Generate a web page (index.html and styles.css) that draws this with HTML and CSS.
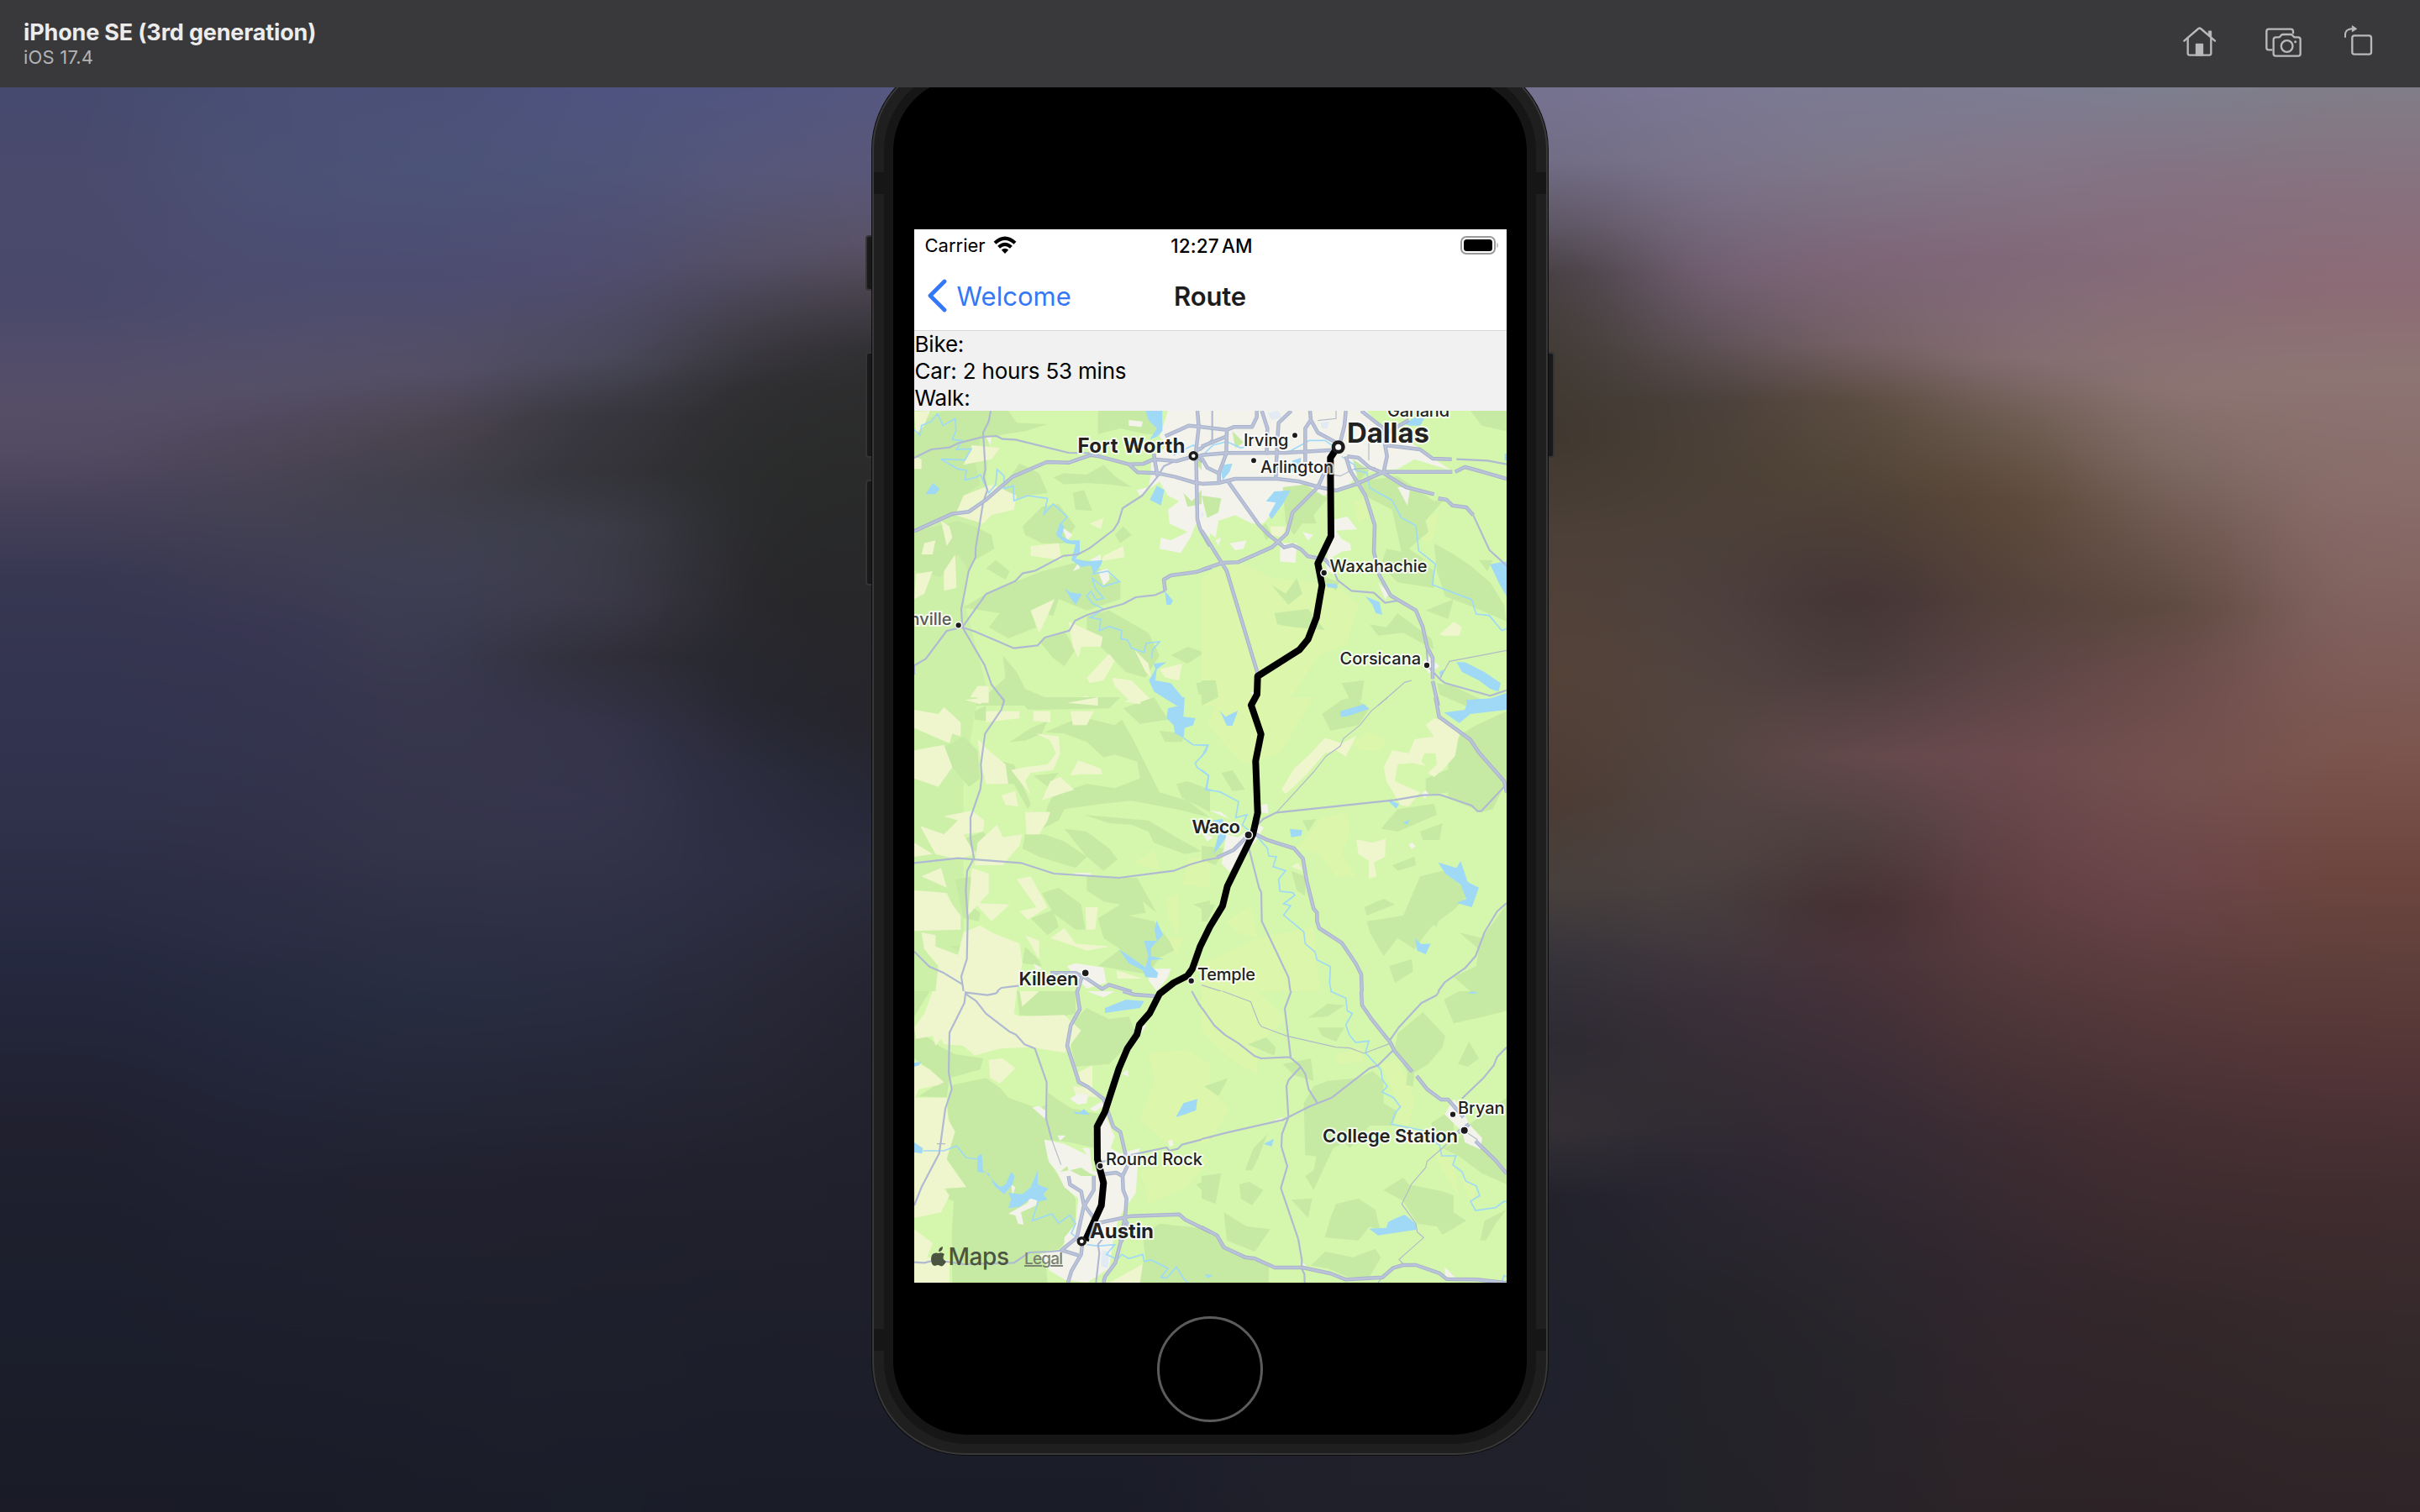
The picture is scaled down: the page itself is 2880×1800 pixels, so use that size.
FILE: index.html
```html
<!DOCTYPE html>
<html lang="en">
<head>
<meta charset="utf-8">
<title>iPhone SE (3rd generation)</title>
<link rel="stylesheet" href="styles.css">
</head>
<body>
<header class="toolbar">
  <div class="device-title">
    <h1 class="device-name">iPhone SE (3rd generation)</h1>
    <p class="device-os">iOS 17.4</p>
  </div>
  <div class="tools">
    <svg class="tool tool-home" viewBox="168 90 126 120" fill="none" stroke="#b9b9bb" stroke-width="7" stroke-linecap="round" stroke-linejoin="round">
      <path d="M178 146 L229 102 Q233 99 237 102 L288 146"/>
      <path d="M191 138 V190 Q191 197 198 197 H267 Q274 197 274 190 V138"/>
      <path d="M266 111 H275 V132 L266 125Z" fill="#b9b9bb" stroke-width="3"/>
      <path d="M221 197 V158 H244 V197Z" fill="#b9b9bb" stroke-width="5"/>
    </svg>
    <svg class="tool tool-camera" viewBox="462 90 138 120" fill="none" stroke="#b9b9bb" stroke-width="7" stroke-linejoin="round">
      <path d="M493 178 H480 Q472 178 472 170 V112 Q472 104 480 104 H559 Q567 104 567 112 V121"/>
      <path d="M506 133 H515 Q519 133 521 130 L524 126 Q527 123 531 123 H558 Q562 123 565 126 L568 130 Q570 133 574 133 H585 Q593 133 593 141 V192 Q593 200 585 200 H505 Q497 200 497 192 V141 Q497 133 506 133Z"/>
      <circle cx="545" cy="165" r="20.500"/>
      <circle cx="575" cy="149" r="4.500" fill="#b9b9bb" stroke="none"/>
    </svg>
    <svg class="tool tool-rotate" viewBox="744 90 108 120" fill="none" stroke="#b9b9bb" stroke-width="7" stroke-linejoin="round">
      <rect x="778" y="127" width="68" height="67" rx="8"/>
      <path d="M753 134 V124 Q754 103 779 103" stroke-width="6"/>
      <path d="M778 92 L794 103 L778 113Z" fill="#b9b9bb" stroke-width="3"/>
    </svg>
  </div>
</header>
<main class="stage">
  <svg class="defs" width="0" height="0" aria-hidden="true"><filter id="soften" x="0" y="0" width="1" height="1" color-interpolation-filters="sRGB"><feGaussianBlur stdDeviation="72 0"/></filter></svg>
  <div class="wallpaper" aria-hidden="true">
    <i class="w w1"></i><i class="w w2"></i><i class="w w3"></i><i class="w w4"></i><i class="w w5"></i><i class="w w6"></i>
    <i class="w w7"></i><i class="w w8"></i><i class="w w9"></i><i class="w w10"></i><i class="w w11"></i><i class="w w12"></i>
  </div>
  <div class="phone">
    <i class="key key-mute"></i><i class="key key-up"></i><i class="key key-down"></i><i class="key key-power"></i>
    <div class="frame">
      <i class="band band-tl"></i><i class="band band-tr"></i><i class="band band-bl"></i><i class="band band-br"></i>
      <div class="rim">
        <div class="glass">
          <section class="screen">
            <div class="status">
              <div class="carrier"><span class="carrier-name">Carrier</span>
                <svg class="wifi" viewBox="0 0 28 22" fill="none" stroke="#000" stroke-width="4.200"><path d="M2 8.200 Q14 -2.600 26 8.200"/><path d="M6.600 13.200 Q14 6.600 21.400 13.200"/><path d="M14 21 L9.800 16.600 Q14 12.900 18.200 16.600Z" fill="#000" stroke="none"/></svg>
              </div>
              <div class="clock">12:27<span class="ampm">AM</span></div>
              <svg class="battery" viewBox="0 0 46 22"><rect x="1" y="1" width="40" height="20" rx="6" fill="none" stroke="#9a9a9a" stroke-width="2"/><rect x="4" y="4" width="34" height="14" rx="3.500"/><path d="M43.500 7.500 Q46 11 43.500 14.500Z" fill="#9a9a9a"/></svg>
            </div>
            <nav class="navbar">
              <a class="back"><svg class="chevron" viewBox="0 0 24 40" fill="none" stroke="#3478f6" stroke-width="4.800" stroke-linecap="round" stroke-linejoin="round"><path d="M21 3 L4 20 L21 37"/></svg><span class="back-label">Welcome</span></a>
              <h2 class="nav-title">Route</h2>
            </nav>
            <div class="times"><p>Bike:</p><p class="car">Car: 2 hours 53 mins</p><p>Walk:</p></div>
            <svg class="map" viewBox="1088 489 705 1038">
              <!-- north-west -->
              <g transform="translate(1080 480) scale(.33333)">
                <path class="haze" d="M0 0H300L280 300 200 700 300 1080H0Z"/>
                <path class="wood" d="M24 110L60 60 130 27 360 27 390 70 500 75 420 100 350 110 260 130 240 200 260 290 200 330 180 400 24 450ZM400 215L470 250 500 320 430 330 380 345 340 300ZM520 265L560 250 640 255 700 220 740 260 800 300 720 290 640 285 560 290ZM24 460L180 420 240 440 300 470 310 520 240 560 220 600 180 540 120 620 24 600ZM200 730L280 680 380 640 480 600 640 560 760 640 760 700 640 740 540 700 520 760 440 740 460 800 360 840 290 800 330 750ZM410 440L480 370 540 360 600 440 560 500 480 500 420 470ZM680 27H850L900 110 850 110 760 90 680 110ZM640 760L720 740 860 820 900 900 850 980 780 960 700 880 640 820ZM470 850L560 815 600 880 560 940 520 910ZM340 900L390 960 420 1020 560 1080H240L350 980ZM590 320L630 310 660 385 600 380ZM280 590L315 560 365 600 350 630ZM940 900L1000 870 1060 890 1000 930ZM1030 1000L1080 990V1050L1040 1040ZM980 340L1030 290 1060 330 1040 400ZM740 470L770 440 800 470 760 500Z"/>
                <path class="field" d="M24 30L80 27 60 80 30 110ZM200 330L300 290 390 330 380 380 300 400 270 430 170 400ZM230 150L330 160 300 200 200 220ZM440 510L540 500 550 560 440 545ZM440 740L525 700 500 760 470 820ZM575 780L620 800 697 835 690 870 620 870 610 910 590 870ZM640 980L720 895 740 920 700 990 650 1000ZM730 980L800 990 870 1060 860 1080 800 1070 740 1010ZM60 500L100 490 90 540 50 540ZM130 600L170 540 175 660 130 670ZM30 610L90 600 60 680 24 700ZM650 430L700 410 690 450ZM900 950L980 930 970 990 920 980ZM250 1010L290 1010 290 1070 210 1070ZM120 420L150 440 160 480 140 510ZM700 545L770 510 775 550 690 565ZM810 880L860 930 870 980 850 960ZM24 190L50 200V235H24ZM560 1060L640 1045 700 1080H560Z"/>
                <path class="town" d="M930 27H1080V480L1030 430 1010 480 975 535 900 520 905 480 940 490 1000 460 935 430 930 380 970 350 930 330 900 280 830 330 818 310 860 300 870 250 870 200 930 150 900 120ZM790 60L840 65 835 85 790 80ZM280 120L300 122 295 150ZM650 560L690 540 690 570ZM680 600L715 590 722 630 700 650ZM590 600L610 570 615 590ZM550 440L590 470 570 490Z"/>
                <path class="wood" d="M985 320L1015 350 1050 310V360L1000 370ZM1020 200L1060 170 1080 200 1050 240Z"/>
                <path class="water" d="M850 27H910V100L890 120 865 130 890 90 860 60ZM65 325L90 285 115 305 100 325ZM890 295L917 310 905 365 865 345ZM530 470L545 425 560 440 550 475 580 490 615 490 615 535 600 555 640 565 697 560 690 580 665 612 655 580 620 585 585 560 600 505 565 500ZM560 660L580 675 622 682 600 720 585 700ZM918 670L948 705 940 720 925 720ZM866 880L880 930 925 925 890 950 885 990 940 1000 990 1060 975 1080H960L880 1030 862 990 885 950Z"/>
                <path class="river" d="M24 95L45 115 50 80 85 65 107 38 127 80 170 55 173 100 160 130 195 133 175 165 228 163 205 203 120 200 180 235 210 240 205 275 245 265 260 255 290 320 315 290 320 237 345 260 345 305 378 295 380 348 430 330 500 340 488 395 520 360 570 405 545 435M660 610L715 600 757 637 697 655 660 625 670 660 700 697 675 703 655 672 640 687 660 715 700 735 652 765 690 772 685 812 720 798 765 812 762 842 785 845 800 875 845 890 852 857 900 852 875 880 872 910M950 185L1000 160 1020 150 1050 170"/>
                <path class="road" d="M24 195L85 165 150 158 180 143 270 120 317 117 340 128 385 130 575 177 650 178M297 27L290 65 270 105 278 235 272 265 285 310 270 355 243 520 243 550 218 600 205 670 192 735 196 800 280 682 385 635 410 608 457 598 557 545 608 540 650 518 735 453 753 425 768 375 838 330 893 262 915 225 960 205M24 970V937L65 913 140 813 196 800 240 815 380 875 465 865 490 837 578 812 598 777 640 757 705 735 770 717 815 693 885 685 920 670M196 800L275 935 300 1005 345 1062 340 1080"/>
                <path id="hw-a" class="highway" d="M24 457L160 395 218 388 280 345 375 263 497 210 577 212 655 185 685 190 790 218 840 217 880 200 960 207 1020 190 1080 185M790 218L822 247 893 250 955 263 1030 285 1090 290M880 180L882 200 893 262M1085 586L1030 603 940 615 915 630 920 670M920 118L1005 80 1090 88M1035 27L1040 85 1030 170 1035 415 1045 450 1080 510M1030 170L1080 145M1040 195L1080 235"/>
                <use href="#hw-a" class="lane"/>
              </g>
              <!-- north-east -->
              <g transform="translate(1430 480) scale(.33333)">
                <path class="meadow" d="M240 620L480 650 560 720 520 860 420 900 300 1080H0V620L120 560ZM540 350L590 340 600 400 560 430ZM800 400L850 390 820 500 770 480Z"/>
                <path class="wood" d="M560 280L700 260 830 350 870 340 800 420 810 460 740 520 800 560 720 560 680 380 600 340ZM660 520L760 540 830 600 830 660 700 640 640 580ZM830 500L900 540 960 580 1030 640 1080 720 1089 780 1000 740 870 690 840 600ZM960 27H1089V100L1000 80ZM250 650L300 680 340 625 360 680 310 720ZM260 750L380 735 440 810 330 800 270 790ZM600 790L660 800 700 750 820 840 830 880 720 820 630 830ZM440 620L490 640 480 670 440 640ZM500 1000L580 990 570 1060 540 1080ZM0 990H50L60 1050 0 1080ZM800 740L850 720 900 700 880 770ZM840 1000L900 1010 1000 1060 940 1080 850 1040ZM990 560L1040 560 1020 600Z"/>
                <path class="town" d="M0 27H590L640 90 760 150 890 240 760 200 700 235 640 240 560 250 520 300 460 320 410 340 380 400 320 390 300 340 220 430 180 430 120 400 60 420 50 480 0 440ZM450 420L520 405 555 450 480 455 500 485 530 500 535 525 500 530 450 560ZM280 500L340 500 335 570 280 565ZM630 640L670 680 655 700ZM790 925L810 905 850 940 810 965ZM700 300L745 300 735 365ZM360 460L400 470 380 490ZM100 500L160 490 150 520 120 525ZM430 540L490 620 450 600ZM50 490L70 480 60 510ZM170 1030L200 1035 190 1050Z"/>
                <path class="wood" d="M0 330L70 340 60 390 20 410ZM290 300L370 290 450 340 400 400 410 430 360 430 330 470 300 430ZM210 440L230 430 250 470 230 490ZM110 100L150 140 120 160ZM540 200L600 240 560 280Z"/>
                <path class="field" d="M245 440L300 440 290 480 250 470ZM850 825L900 780 930 800 920 830 860 830Z"/>
                <path class="water" d="M230 350L260 315 317 312 290 360 250 415 240 400 265 355ZM80 220L110 215 100 245 75 275 70 250ZM725 75L760 50 795 55 780 80 745 80ZM325 205L355 195 350 250 310 245ZM445 645L480 645 487 660 450 658ZM585 690L635 710 645 755 622 750 610 720ZM1030 575L1089 565V690L1060 640ZM910 925L940 925 1010 960 1068 1000 1060 1030 1030 1020 990 990 930 960ZM945 1060L1030 1055 1089 1035V1080H950ZM1082 180H1089V205H1082ZM848 960L865 950 855 985Z"/>
                <path class="sky" d="M235 35L275 27 285 50 250 60ZM425 70L455 65 450 90 430 90ZM0 385L8 400 0 410Z"/>
                <path class="river" d="M500 190L545 220 550 240 590 248 600 302 680 347 712 408 765 437 775 527 835 575 823 648 965 702 980 753 1027 758 1072 812 1089 805M310 175L385 133 440 133 480 160M0 190L40 150 90 137 140 160 175 150"/>
                <path class="road" d="M470 590L485 632 535 670 615 677 655 713 700 705M970 400L1028 525 1089 580M910 200L1020 205 1089 218M38 27V130L0 165M850 985L870 1000 1030 1045 1089 1025M803 870L808 940 850 985"/>
                <path class="lane-thin" d="M850 985L885 922 1089 883M750 990L725 997 630 1080M480 27V55L415 62M597 130V205M620 230L545 235 495 260 430 250"/>
                <path id="hw-b" class="highway" d="M0 185L90 178 300 177 470 167M0 288L60 285 120 270 270 270 350 280 420 300 480 312 550 290 650 245 895 245M905 245L940 228 985 240 1089 270M650 250L730 300 830 325M845 340L875 345 895 365 945 372 970 400M515 190L530 240 585 330 618 435 615 530 635 615 675 687 765 740 790 800 805 870 825 910 825 985M825 992L845 1080M515 27L510 80 490 160M387 27L390 60 370 90 370 210M390 60L415 105 480 140M520 190L560 195 600 230 650 250M655 150L662 190 650 245M570 27L650 90 655 150 780 165 825 198 893 200M320 27L275 70 270 140 265 270M197 27V50L180 85H115L90 95 0 85M90 95L88 180 62 250 62 285M215 27L235 90 232 185M90 118L0 155M95 280L205 435 240 470 275 498M450 220L415 300 325 390 305 465 270 498 250 515 130 568 75 570 0 595M275 498L295 515 325 507 355 522 380 547 440 558 470 590M0 455L75 575 90 600 200 965M0 195L20 230 60 250M655 110L740 60"/>
                <use href="#hw-b" class="lane"/>
              </g>
              <!-- west -->
              <g transform="translate(1080 830) scale(.33333)">
                <path class="haze" d="M0 0H250L200 300V1050H0Z"/>
                <path class="wood" d="M350 0H760L720 40 430 45 400 10ZM130 180L200 140 250 190 260 290 220 320 140 230ZM340 230L380 240 440 380 430 400 380 310 330 310ZM450 280L540 270 500 320ZM490 125L620 70 740 100 765 80 800 140 860 260 900 340 1000 370 1080 430 960 400 800 370 700 380 560 400 540 440 480 470 500 390 520 350 640 310 740 325 830 290 820 230 740 205 700 215 640 160 560 130ZM560 470L640 480 720 540 750 580 700 620 640 570ZM630 420L740 430 860 440 960 500 1050 550 990 560 880 520 860 480 800 455 720 450ZM420 490H490L560 515 640 570 600 610 470 570 410 540ZM480 700L540 680 620 740 635 830 600 830 520 770ZM640 640L820 645 890 770 840 730 850 770 790 780 880 800 960 900 900 930 860 990 680 960 760 900 700 860 680 790 760 740 700 730 640 690ZM440 790L520 760 540 820 500 850ZM170 650L240 640 220 740 260 770 255 800 200 790ZM190 510L270 480 293 510 270 550 200 550ZM150 890L220 880 260 835 280 900 230 930ZM420 890L470 940 480 960 410 950ZM365 160L440 110 500 85 480 130 420 155ZM770 40L880 0 930 80 830 95ZM900 120L990 130 980 160 920 160ZM960 310L1000 300 1080 330V410L980 360ZM100 130L150 130 150 170ZM1020 740L1080 725V770ZM240 50L280 30V85L240 80Z"/>
                <path class="meadow" d="M920 720L970 700V860L930 780ZM810 590L880 545 900 620ZM1000 580L1080 560V680L980 670ZM930 860L990 860 960 920Z"/>
                <path class="field" d="M24 45L110 60 130 35 190 90V140L160 130 150 165 24 110ZM24 190L130 170 160 250 110 320 24 290ZM280 50H400L400 75 280 90ZM450 50H510V90L450 85ZM582 50H665L640 100 590 100ZM570 20L680 0V30ZM770 15L840 0 830 25ZM250 150L290 190 350 240 360 310 280 310 265 250ZM205 10L290 0 260 25ZM460 130L540 140 545 200 520 260 440 270 420 300 440 350 370 260 420 250 500 240 530 200 510 155ZM580 280L610 225 690 255 695 275 620 275ZM480 368L510 300 545 285 595 330ZM335 350L385 335 395 390 350 385ZM45 460L130 490 180 440 130 425 230 405 275 440 270 480 200 490 240 560 180 580 100 560ZM250 520L320 455 340 500 410 490 400 530 340 600 240 600ZM420 410L510 410 500 440 470 490 425 490ZM24 520L90 560 24 570ZM24 690L100 695 140 700 160 740 190 780V830L24 835ZM230 610L290 630V700L215 780ZM50 640L120 610 140 680ZM240 735L365 740 300 800ZM390 650L440 640 500 750 430 795 400 765 460 750ZM635 750L680 750 670 830 640 830ZM200 840L260 815 300 840 400 880 410 950 390 1050H100L110 960 60 900 50 840 100 850V890L180 920ZM510 860L560 825 600 880 725 890 640 905ZM420 850L470 870V935ZM745 975L840 1005 750 1005Z"/>
                <path class="town" d="M570 960L600 950 700 965 710 1020 640 1040 600 1000ZM870 970L940 970 930 1000 890 1050 860 1010ZM595 628H655V636H595ZM450 950L480 970 460 975Z"/>
                <path class="water" d="M950 0H990L985 70 1028 75 1020 100 990 110 985 145 955 130 950 100 925 75 930 40 970 30ZM755 900L800 930 850 965 860 925 845 870 890 870 882 830 890 797 912 850 870 895 870 925 915 935 870 940 870 960 895 985 890 1003 850 1000 840 975 790 950Z"/>
                <path class="river" d="M985 145L1020 170 1073 172 1065 195 1027 235 1035 252 1075 280 1068 330 1085 332"/>
                <path class="road" d="M335 0L345 12 335 45 277 130 262 240 265 285 260 328 225 430 225 505 237 575 213 620 208 690 215 790 212 935 192 997 200 1050M24 592L180 575 405 592 523 630 755 645 950 620 1010 597 1085 576M24 908L78 962 130 985 195 1025M320 1050L335 1038 400 1030"/>
                <path id="hw-c" class="highway" d="M510 985H600L640 1005 695 1042 720 1027 800 1052M622 1000L605 1055"/>
                <use href="#hw-c" class="lane"/>
              </g>
              <!-- east -->
              <g transform="translate(1430 830) scale(.33333)">
                <path class="meadow" d="M60 0H400L280 200 150 240 20 100ZM430 430L520 410 530 480 500 560 550 640 480 640 420 560 340 540ZM540 160L600 120 660 150 640 190 560 190ZM90 800L180 740 200 860 130 840ZM200 860L400 820 420 1050H0V950Z"/>
                <path class="wood" d="M430 60L500 10 540 0 600 40 560 100 460 120ZM640 470L700 400 830 380 840 420 700 480ZM880 190L930 130 980 100 1089 50V300L1040 400 1000 410 880 360ZM800 290L900 250 880 340 800 350ZM940 260L1040 230 1089 300 1000 390ZM590 800L720 780 780 640 860 620 960 700 900 760 820 820 760 900 700 860 650 925 600 840ZM680 600L760 570 765 600 700 620ZM580 750L650 720 690 740 590 780ZM800 800L850 780 840 820ZM920 840L1000 860 1089 740V1050H960L900 1000 980 960 990 900ZM780 480L860 450 850 510 790 510ZM320 620L370 640 370 710 340 690ZM70 270L110 260 155 330 110 335ZM670 960L750 935 755 980 690 1020ZM360 440L410 435 380 480ZM0 740H50L20 800H0ZM0 530L80 540 50 600 0 580Z"/>
                <path class="field" d="M285 330L330 255 390 200 440 145 500 165 553 138 515 212 480 190 440 200 380 270 340 310 300 345ZM650 250L680 190 740 200 760 150 830 140 800 100 830 75 880 90 920 130 905 210 860 260 830 285 808 270 840 240 835 200 795 200 785 230 800 245 750 235 700 240 690 300 780 340 740 390 710 385 660 300ZM552 508L610 520 657 505 655 570 615 590 625 640 597 648V585L560 560ZM320 605L345 590 360 620Z"/>
                <path class="water" d="M495 50L580 25 598 42 520 68 497 70ZM865 55L940 45 950 10 1089 0V45L960 60 920 92ZM65 48L85 70 130 48 110 102 90 102ZM315 470L360 475 355 495 320 500ZM845 590L910 610 925 585 950 660 990 680 965 750 910 735 945 720 925 670 870 630ZM762 862L785 882 818 880 800 918 770 905ZM40 440L75 435 88 500 60 540 42 560 60 490ZM720 448L742 438 735 455ZM660 365L705 380 695 398Z"/>
                <path class="town" d="M88 490L130 500 200 455 222 465 190 520 140 560 100 625 72 595ZM785 345L800 332 812 348 795 362ZM740 528L750 518 764 532 750 543ZM30 405L70 410 100 435ZM0 480L40 500 20 515ZM212 385L235 380 238 415 215 412Z"/>
                <path class="river" d="M0 260L25 280 15 330 65 338 132 373 122 430 162 420 145 457 200 500 235 540 240 567 267 570 255 605 300 620 275 650 280 693 325 698 333 707 293 738 318 745 293 778 365 838 370 880 405 910 412 938 460 962 457 1020 463 1050M0 213L22 172H0"/>
                <path class="road" d="M165 525L205 680 213 697 215 800 310 1000 317 1050M200 455L220 435 267 412 690 367 790 350 850 348 965 387 985 407H998L1082 318M1089 735L1055 765 1010 840 978 925 940 968 868 1018 845 1050M0 585L60 573"/>
                <path class="lane-thin" d="M0 1028L75 1052M665 0L605 50 565 100 507 147 495 175 445 210 400 267 267 412"/>
                <path id="hw-d" class="highway" d="M835 0L848 70 960 152 990 197 1080 300 1089 340M55 573L115 545 160 500M185 485L230 508 330 540 362 577 375 655 400 755 412 770V800L420 825 500 877 550 950 570 990 572 1052"/>
                <use href="#hw-d" class="lane"/>
              </g>
              <!-- south-west -->
              <g transform="translate(1080 1180) scale(.33333)">
                <path class="wood" d="M160 335L280 310 330 345 360 380 470 420 500 400 640 430 700 440 660 490 670 560 580 540 490 530 500 600 560 690 600 740 600 850 540 920 490 930 500 1041H160L158 860 165 750 140 740V600L160 500 140 420ZM500 360L540 390 620 440 500 420ZM570 130L640 60 720 100 790 90 820 160 780 200 720 260 600 270ZM390 0H600V80L520 95 400 85ZM24 130L120 200 170 225 270 240 260 280 150 310 140 380 40 375 110 330 80 280 24 240ZM800 1041L850 960 840 870 900 830 1080 850V1041ZM24 0H80L24 90ZM1030 690L1080 670V740Z"/>
                <path class="meadow" d="M860 220L1000 210 1080 260V540L920 540 830 460 880 320ZM830 640L1080 600 1000 700 860 760Z"/>
                <path class="field" d="M24 130L60 80 90 0H390L380 80 400 90 560 85 620 140 560 220 440 200 330 205 240 230 200 195 130 190 120 170 100 195 90 160 30 170ZM290 245L340 240 385 275 330 330 295 310ZM24 250L80 280 130 325 110 335 40 350 24 390ZM24 380L140 380 145 460 170 500 140 600 210 700 130 705 150 730 120 790 24 810ZM24 850L90 900 70 950 150 960V1041H24ZM400 0H470L410 55ZM610 290L660 265V345L620 325ZM590 340L650 345 680 380 600 370ZM720 780L770 765 760 820 720 830ZM720 1041L840 975 830 1041Z"/>
                <path class="town" d="M488 530L560 545 640 585 625 560 650 560 660 640 690 650 675 490 705 440 740 520 725 560 760 580 830 560 825 580 815 720 760 800 740 850 720 990 640 1041 560 1030 510 1000 470 940 560 920 560 880 600 830 610 740 560 700 530 640 505 610ZM580 385L610 365 645 370 640 400 610 405ZM445 415L470 410 497 430 490 455ZM370 690L385 700 375 730ZM440 710L467 720 460 765 405 790 415 835 395 830 385 800 360 795 430 755ZM650 420L700 390 700 410 670 430ZM640 0H740L700 22ZM930 535L945 530 950 550 935 555ZM830 125L855 120 835 150ZM765 295L785 280 790 305ZM535 515H565L545 535Z"/>
                <path class="wood" d="M580 640L620 630 650 650 675 660 620 660ZM545 645L570 625 575 640Z"/>
                <path class="sky" d="M695 925L720 930 715 990 690 980Z"/>
                <path class="water" d="M705 60L780 30 845 35 830 60 760 70 705 78ZM24 540L55 560 52 580 24 575ZM590 430L615 433 630 420 650 442 600 438ZM958 450L985 400 1035 385 1030 425 990 440ZM360 775L370 740 360 720 410 725 440 700 465 640 465 690 503 705 485 725 500 745 470 750 440 740 400 770ZM250 590L265 580 270 640 330 700 350 690 370 645 383 660 375 690 345 725 310 695 290 650 250 645ZM24 255L50 253 40 265 24 270ZM1065 1005L1080 1000V1020Z"/>
                <path class="river" d="M55 570H130L175 553 210 595 255 600M440 710L467 750 445 820 515 795 540 828 580 800 600 830 585 865 605 880M640 905L680 910 740 905 710 940 750 958 765 940 790 955 840 940 845 965 870 960 930 990 905 1022 925 1025 960 985 985 1025 1000 1041"/>
                <path class="road" d="M208 0L203 42 150 148 147 290 158 350 135 420 113 580 50 700 24 765M205 8L245 35 280 80 365 145 387 155 418 190 455 205 497 325 495 455 515 530M210 5L285 14 315 8 325 0M24 968L60 970 100 960 200 975 380 970 435 933 510 930 560 925M1015 0L1040 45 1085 105M690 610L820 580 925 558 935 570 965 563 980 548 1085 521M673 1041L685 935 680 905 700 880"/>
                <path class="lane-thin" d="M515 530L548 620M105 545H135"/>
                <path id="hw-e" class="highway" d="M605 0L615 65 583 122 570 195 612 325 645 343 700 385 735 485 760 503 787 620 768 660 770 710 782 740 778 795 760 900 742 970 705 1020 700 1041M575 660L580 690 620 715 630 765 605 880 550 925 610 943M665 660V710L632 765 665 810M770 805L790 840 760 900M680 828L800 803 970 797 990 815 1085 862M573 1041L585 1000 620 940 625 895M690 655L745 648 768 660M770 0L810 12 890 18"/>
                <use href="#hw-e" class="lane"/>
              </g>
              <!-- south-east -->
              <g transform="translate(1430 1180) scale(.33333)">
                <path class="meadow" d="M640 260L700 240 760 380 740 480 690 470 700 400ZM0 0H200L300 100 200 190 200 300 100 240 0 140ZM0 300L100 420 40 520 0 540ZM820 560L900 600 920 740 860 640ZM470 230L570 200 580 250 490 260ZM920 660L980 690 970 780Z"/>
                <path class="wood" d="M700 150L790 75 870 160 860 200 810 260 760 290 755 340 730 335 735 290 690 200ZM365 400L400 340 450 320 560 310 610 285 650 320 650 400 700 430 680 480 600 480 530 560 510 540 470 560 400 710 370 660 400 640 410 590 370 585ZM440 880L460 810 480 760 560 740 620 780 640 860 600 840 560 890ZM650 710L720 665 740 690 860 715 900 730 900 790 945 820 860 870 840 840 770 830 720 750ZM0 860L60 880 100 930 240 980V1041H0ZM135 690L170 680 220 710 180 765 140 740ZM155 640L185 560 235 510 200 600 180 640ZM320 745L395 740 380 810ZM860 560L910 540 950 480 1089 380V690L1000 650 920 590ZM865 30L920 0H1089V70L1010 90 900 115ZM390 980L440 930 540 950 620 920 640 950 600 1020 520 1020 450 990ZM165 190L230 165 265 200 260 230ZM415 130L510 130 480 180 430 160ZM380 95L450 45 510 50 450 90ZM820 470L900 420V500L830 520ZM10 340L95 310 60 375ZM915 260L955 180 990 240 950 270ZM995 890L1010 820 1089 780 1050 830 1015 890ZM0 660L70 650 50 760 0 740ZM80 790L160 840 245 850 190 930 90 890ZM450 400L540 340 560 400ZM290 260L390 240 400 320 330 300Z"/>
                <path class="town" d="M868 440L900 385 935 430 955 475 1002 525 995 565 940 540 930 500ZM260 460L290 450 280 468ZM868 985L908 1025 870 1020ZM355 965L375 980 355 985Z"/>
                <path class="water" d="M598 848L660 845 665 825 695 810 725 798 765 830V852L700 862 630 872ZM222 545L258 527 250 555ZM947 8L970 0 988 8ZM12 1010L40 1015 22 1025ZM820 520L850 530 840 550Z"/>
                <path class="river" d="M460 0L515 25 520 70 538 80 515 120 527 155 550 183 597 178 585 220 640 280 645 315 663 340 645 360 685 380 710 413 690 435 678 475 790 497 850 550 857 588H908L897 620 930 645 943 678 980 695 993 730 960 750 978 783 1050 773 1080 750 1089 752M1070 1041L1080 1015 1089 1020"/>
                <path class="road" d="M0 58L45 122 85 157 130 185 190 232 213 240 315 235 350 265 370 295 382 350 412 398M320 0L297 62 318 235M352 272L310 318 303 340 310 450 287 510 285 555 306 625 283 703 345 885 358 960 357 990 367 1010 368 1041M0 528L90 505 290 460 310 450 385 412 465 380 600 275 630 265 685 210M848 0L838 15 785 42 705 128 672 175M1089 200L1055 235 1043 265 1008 308 930 383"/>
                <path class="lane-thin" d="M75 0L175 37 205 115 215 127 305 160 480 200 530 203 580 222 670 188M900 525L805 608 800 630 750 688 715 760 765 830 770 860 793 880 705 958 720 975M940 500L985 530M645 1022L630 1041"/>
                <path id="hw-f" class="highway" d="M570 0L573 50 605 97 675 185 690 215 752 288M768 303L805 350 855 387H880L935 450M978 535L1050 605 1089 652M0 843L55 872 80 915 155 950 190 955 262 987H360L460 1008 515 1030 645 1022 685 988 720 978H765L850 1008 875 1028 985 1030 1089 1042M915 505L955 475"/>
                <use href="#hw-f" class="lane"/>
              </g>
              <path class="route" d="M1592 532L1583.300 545 1584 638.300 1568.300 670.700 1573.300 696.700 1566.700 735 1556.700 761 1546.700 773.300 1496.700 805 1496 826.700 1489 839.500 1500.700 874 1494.300 906 1496.700 967.700 1491 993.300 1460.700 1055 1455 1078.300 1440 1103 1428.300 1126.700 1419 1153.300 1413 1161.700 1396.700 1170 1380 1183 1368.300 1206 1356 1220 1353 1231.700 1341.700 1248.300 1331.700 1271.700 1315 1323.300 1305.700 1341 1306 1380 1313.300 1408.300 1310.700 1435 1291.700 1476.700"/>
              <g class="pins">
                <circle class="ring" cx="1592.700" cy="532.300" r="5.800"/><circle class="ring ring-s" cx="1420.300" cy="542.700" r="4"/><circle class="ring ring-s" cx="1287.300" cy="1477.700" r="4"/>
                <circle cx="1541" cy="518.300" r="3.700"/><circle cx="1492" cy="548.300" r="3.700"/><circle cx="1575.700" cy="682" r="3.900"/><circle cx="1698" cy="792" r="3.900"/><circle cx="1140.700" cy="744.300" r="3.900"/><circle cx="1485.700" cy="994" r="4.800"/><circle cx="1291.700" cy="1158.300" r="4.600"/><circle cx="1417.700" cy="1167.700" r="3.900"/><circle cx="1309.300" cy="1388" r="3.900"/><circle cx="1742.700" cy="1345.700" r="4.800"/><circle cx="1729" cy="1326.700" r="3.900"/>
              </g>
              <g class="labels">
                <text class="metro" x="1603" y="526.700" textLength="98">Dallas</text>
                <text class="city" x="1282.500" y="539" textLength="128">Fort Worth</text>
                <text class="city" x="1297" y="1473.500" textLength="76">Austin</text>
                <text class="large" x="1418.500" y="992" textLength="57.500">Waco</text>
                <text class="large" x="1212.500" y="1173.300" textLength="71">Killeen</text>
                <text class="large" x="1574" y="1360" textLength="161">College Station</text>
                <text x="1480" y="530.700" textLength="53.500">Irving</text>
                <text x="1500" y="563.300" textLength="87">Arlington</text>
                <text x="1651" y="495.700" textLength="74">Garland</text>
                <text x="1582.500" y="680.700" textLength="116">Waxahachie</text>
                <text x="1594.500" y="791" textLength="96.500">Corsicana</text>
                <text class="faded" x="1132.500" y="743.500" text-anchor="end">Stephenville</text>
                <text x="1425" y="1166.700" textLength="69">Temple</text>
                <text x="1316" y="1386.700" textLength="115">Round Rock</text>
                <text x="1735" y="1325.700" textLength="55.500">Bryan</text>
              </g>
              <g class="brand">
                <path d="M1122 1484 Q1117 1485 1117 1490 Q1122 1490 1122 1484ZM1117 1492 Q1120 1490 1124 1493 Q1120 1498 1126 1502 Q1122 1509 1119 1507 Q1116 1505 1113 1507 Q1108 1507 1108 1498 Q1109 1490 1117 1492Z"/>
                <text class="brand-name" x="1128.500" y="1506" textLength="72.500">Maps</text>
                <text class="legal" x="1219" y="1505" textLength="46">Legal</text>
              </g>
            </svg>
          </section>
          <i class="home-button"></i>
        </div>
      </div>
    </div>
  </div>
</main>
</body>
</html>
```
FILE: styles.css
```css
* { box-sizing: border-box; margin: 0; padding: 0; }
html, body { height: 100%; }
body {
  display: flex;
  flex-direction: column;
  width: 2880px;
  height: 1800px;
  overflow: hidden;
  background: #1b1d29;
  font-family: Inter, "Liberation Sans", sans-serif;
}
i { display: block; }

.toolbar {
  flex: none;
  display: flex;
  justify-content: space-between;
  align-items: flex-start;
  height: 104px;
  padding: 23px 56px 0 28px;
  background: #39393b;
  position: relative;
  z-index: 2;
}
.device-name { font-size: 27px; line-height: 32px; font-weight: 700; color: #ececec; letter-spacing: -.16px; white-space: nowrap; }
.device-os { font-size: 22px; line-height: 27px; color: #b3b3b5; letter-spacing: .2px; }
.tools { display: flex; padding-top: 7px; }
.tool { height: 40px; overflow: visible; }
.tool-home { width: 42px; margin-right: 56px; }
.tool-camera { width: 46px; margin-right: 48px; }
.tool-rotate { width: 36px; }

.stage { flex: 1; display: flex; justify-content: center; align-items: flex-start; position: relative; overflow: hidden; }
.defs { position: absolute; }

/* Blurred desktop: vertical colour columns melted together sideways */
.wallpaper {
  position: absolute;
  inset: 0 -240px;
  display: grid;
  grid-template-columns: 443px 203px 203px 203px 169px 459px 502px 175px 186px 183px 193px 1fr;
  filter: url(#soften);
}
.w1 { background: linear-gradient(#454a6e, #4a4a6c 6.500%, #4a496b 15%, #564e68 22%, #534b62 25.500%, #47415a 29%, #373752 34.500%, #32334f 45%, #2f3049 52%, #252940 61%, #20202f 73%, #1b1e2c 86%, #1a1b26); }
.w2 { background: linear-gradient(#494f75, #4b5175 6%, #4b4c70 13%, #554f68 21%, #4d4658 25.500%, #434152 30%, #383652 38%, #34344f 45%, #303048 54%, #252a3f 64%, #202131 77%, #191b27); }
.w3 { background: linear-gradient(#4b5078, #4c5378 6%, #4c4c71 13%, #554f66 20%, #4b4450 24%, #403f4a 28%, #3f4054 34%, #38374e 43%, #33334a 54%, #272d40 64%, #21212f 77%, #1a1c28); }
.w4 { background: linear-gradient(#4e5480, #4e5479 6%, #504d70 13%, #4b4a5c 19%, #38373f 23%, #34343a 27%, #3c3d49 31%, #3c3a49 36%, #302f3a 40%, #35344a 45%, #36354e 50%, #303147 57%, #272b3d 65%, #21202e 77%, #1a1e29); }
.w5 { background: linear-gradient(#505580, #57577a 6%, #555066 12%, #403c45 17%, #2e2e30 21%, #2a2b2b 27%, #27272a 36%, #262630 43%, #2a2b3c 48%, #2d2e42 55%, #282837 64%, #21212d 77%, #1c1e2a 89%, #1a1c28); }
.w6 { background: linear-gradient(#565880, #5a5778 6%, #5a5266 11%, #46404a 14.500%, #2e2e30 18.500%, #292a29 27%, #25242a 45%, #262838 51%, #2a2b3a 55%, #242330 63%, #20202c 77%, #1a1c28); }
.w7 { background: linear-gradient(#757290, #726d86 5%, #5d5664 9.500%, #453f41 13%, #403a33 19%, #40382f 25%, #4d4038 32%, #544238 41%, #4b3b33 50%, #47403c 56%, #36333a 61%, #2d2a32 67%, #343035 73%, #22222c 78%, #1f212d 89%, #20202a); }
.w8 { background: linear-gradient(#7b7794, #7a7389 6%, #736074 13%, #5e5157 18%, #4a403b 22%, #4b4036 27%, #4e413e 36%, #534540 45%, #4f4342 54%, #453c3f 59%, #3b303a 64%, #332d33 70%, #2a2632 77%, #242328 86%, #222229); }
.w9 { background: linear-gradient(#7b7a92, #7e788a 5%, #7d6678 12%, #756166 18%, #5b4c40 22%, #524538 27%, #433435 36%, #4a3c3c 41%, #64494b 47%, #4f4040 52%, #432f32 57.500%, #48333a 61%, #3a2c36 70%, #2d272f 80%, #26252a 89%, #272329); }
.w10 { background: linear-gradient(#7d7c92, #837586 6%, #806879 12%, #846e72 19%, #6c5b50 23.500%, #5b4838 29%, #54423b 36%, #5a4443 40%, #6c4a4e 47%, #603f42 57%, #513839 64%, #3e2d33 73%, #33272e 83%, #2c2327); }
.w11 { background: linear-gradient(#7d7f8f, #847283 6%, #866b78 13%, #8c7472 21%, #7f6a64 26%, #6e5850 31%, #5d493f 36.500%, #6a4c4a 41%, #74514f 48%, #6c464a 55.500%, #583a3b 64%, #452f33 73%, #33272a 86%, #2d2326); }
.w12 { background: linear-gradient(#807d88, #88707d 8%, #8c6b76 14%, #8d7573 20%, #886c69 29%, #80605d 38%, #7c554f 46.500%, #6d453f 55.500%, #60403b 61%, #523436 69%, #412d30 77%, #33282a 89%, #2f2427); }

.phone { position: relative; width: 804px; height: 1664px; margin-top: -36px; }
.frame {
  position: relative;
  height: 100%;
  padding: 11px 12px;
  border: 2px solid #383838;
  border-radius: 110px;
  background: #1f1f1f;
  box-shadow: 0 0 0 1px #0c0c0e;
}
.rim { height: 100%; padding: 11px; border-radius: 99px; background: #161616; }
.glass { display: flex; flex-direction: column; align-items: center; height: 100%; padding-top: 181px; border-radius: 88px; background: #000; }
.band { position: absolute; width: 12px; height: 26px; background: #161616; }
.band-tl { left: 0; top: 135px; }
.band-tr { right: 0; top: 135px; }
.band-bl { left: 0; bottom: 122px; }
.band-br { right: 0; bottom: 122px; }
.key { position: absolute; left: -8px; width: 12px; height: 126px; border: 2px solid #343436; border-radius: 4px; background: #19191a; }
.key-mute { top: 212px; height: 66px; }
.key-up { top: 351px; }
.key-down { top: 503px; }
.key-power { left: auto; right: -8px; top: 351px; }

.screen { flex: none; display: flex; flex-direction: column; width: 705px; height: 1254px; background: #fff; overflow: hidden; }
.status { display: grid; grid-template-columns: 1fr auto 1fr; align-items: center; height: 38px; padding: 0 9px 0 13px; }
.carrier { display: flex; align-items: center; gap: 9px; font-size: 22px; }
.carrier-name { letter-spacing: 0; }
.wifi { width: 28px; height: 22px; }
.clock { font-size: 22.500px; font-weight: 500; letter-spacing: .2px; }
.ampm { margin-left: 3px; }
.battery { width: 46px; height: 22px; justify-self: end; }
.navbar { display: grid; grid-template-columns: 1fr auto 1fr; align-items: center; height: 83px; padding: 1px 0 1px 15px; border-bottom: 1px solid #d8d8d8; }
.back { display: flex; align-items: center; gap: 12px; color: #3478f6; font-size: 31px; }
.back-label { letter-spacing: .05px; }
.chevron { width: 24px; height: 40px; }
.nav-title { margin-left: -15px; font-size: 31px; font-weight: 600; color: #1c1c1e; letter-spacing: -.1px; }
.times { height: 95px; padding-left: 1px; background: #f1f1f1; font-size: 26px; line-height: 32px; letter-spacing: -.2px; }

.map { display: block; width: 705px; height: 1038px; background: #d4f7ad; }
.haze { fill: #cdf0a9; }
.wood { fill: #c6eaa3; }
.meadow { fill: #dcf6ab; }
.field { fill: #eff5cd; }
.town { fill: #f3f3ec; }
.sky { fill: #e2eaf3; }
.water { fill: #a0d9f6; }
.river { fill: none; stroke: #a0d9f6; stroke-width: 5; }
.road { fill: none; stroke: #b0b9d2; stroke-width: 6.500; stroke-linejoin: round; }
.lane-thin { fill: none; stroke: #b2bac8; stroke-width: 3.500; }
.highway { fill: none; stroke: var(--paint, #a9b2cd); stroke-width: var(--breadth, 13.500); stroke-linejoin: round; }
.lane { --paint: #bac3d8; --breadth: 7.500; }
.route { fill: none; stroke: #000; stroke-width: 8; stroke-linejoin: round; }
.pins circle { fill: #1b1b1b; stroke: #fff; stroke-width: 1.500; }
.pins .ring { fill: #fff; stroke: #1b1b1b; stroke-width: 4.500; }
.pins .ring-s { stroke-width: 3.500; }
.labels text { font-size: 20px; font-weight: 500; fill: #222; stroke: rgba(255, 255, 255, .8); stroke-width: 4px; stroke-linejoin: round; paint-order: stroke; }
.labels .large { font-size: 22px; font-weight: 600; }
.labels .city { font-size: 24px; font-weight: 700; }
.labels .metro { font-size: 33px; font-weight: 700; }
.labels .faded { fill: #5a5a5a; }
.brand { fill: #4c553f; }
.brand-name { font-size: 28px; font-weight: 500; }
.legal { font-size: 19px; font-weight: 500; fill: #788070; text-decoration: underline; }
.home-button { flex: none; width: 126px; height: 126px; margin-top: 40px; border: 3px solid #5c5c5c; border-radius: 50%; }
```
